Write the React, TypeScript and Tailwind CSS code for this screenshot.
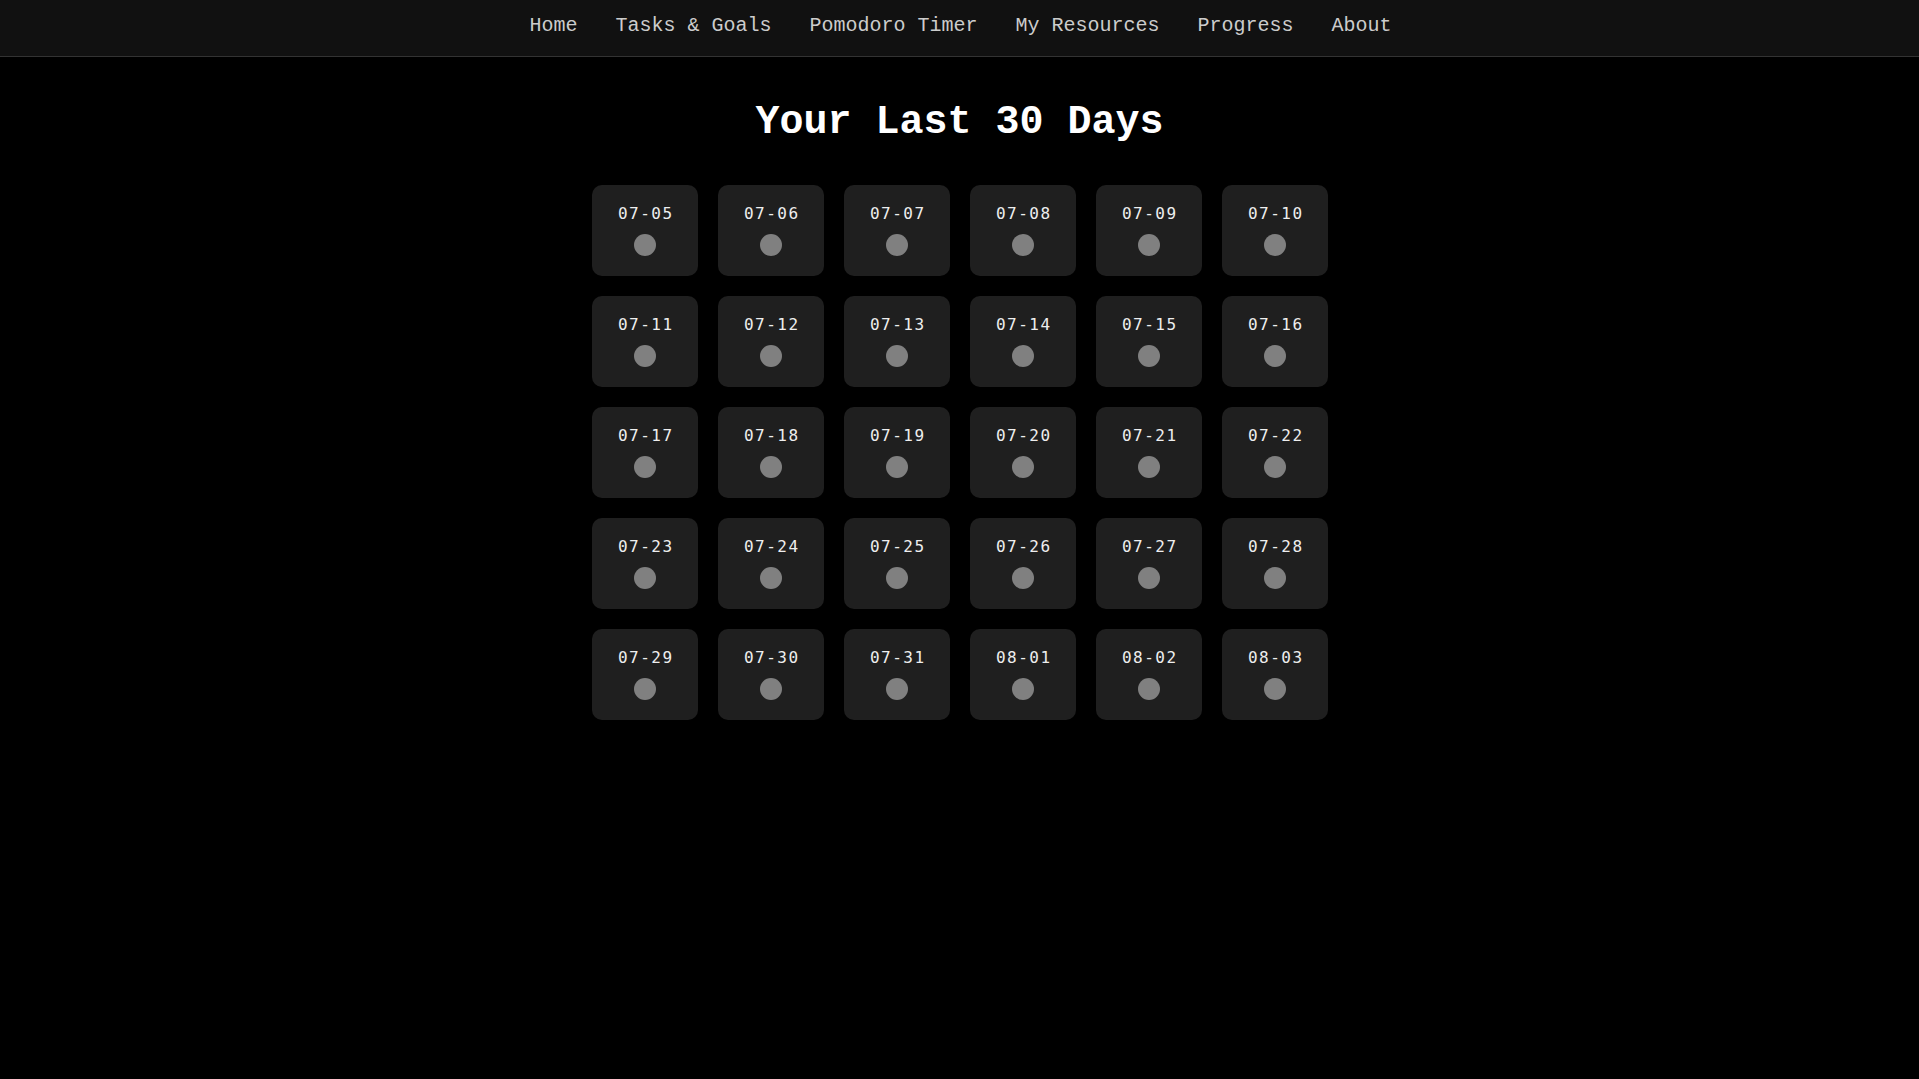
import React from "react";

const navItems = ["Home", "Tasks & Goals", "Pomodoro Timer", "My Resources", "Progress", "About"];

function buildDays(): string[] {
  const out: string[] = [];
  const start = new Date(2024, 6, 5);
  for (let i = 0; i < 30; i++) {
    const d = new Date(start.getFullYear(), start.getMonth(), start.getDate() + i);
    const mm = String(d.getMonth() + 1).padStart(2, "0");
    const dd = String(d.getDate()).padStart(2, "0");
    out.push(`${mm}-${dd}`);
  }
  return out;
}

export default function App() {
  const days = buildDays();
  return (
    <div className="min-h-[1079px] w-full bg-black" style={{ fontFamily: '"Liberation Mono", "Courier New", monospace' }}>
      <nav className="h-[57px] w-full bg-[#111111] border-b border-[#333333] flex justify-center pt-[14px]">
        <div className="flex gap-[38px] text-[20px] leading-[23px] text-[#cccccc] pl-[2px]">
          {navItems.map((n) => (
            <a key={n} className="whitespace-pre cursor-pointer">{n}</a>
          ))}
        </div>
      </nav>
      <h1 className="mt-[43px] text-center text-[40px] leading-[46px] font-bold text-white">Your Last 30 Days</h1>
      <div className="mt-[39px] flex justify-center pl-[1px]">
        <div className="grid grid-cols-[repeat(6,106px)] gap-x-[20px] gap-y-[20px]">
          {days.map((d) => (
            <div key={d} className="h-[91px] rounded-[10px] bg-[#1f1f1f] flex flex-col items-center pt-[19px]">
              <div
                className="text-[16px] leading-[20px] tracking-[1.5px] text-[#eeeeee] pl-[1.5px]"
                style={{ fontFamily: '"DejaVu Sans Mono", "Liberation Mono", monospace' }}
              >
                {d}
              </div>
              <div className="mt-[10px] w-[22px] h-[22px] rounded-full bg-[#808080]" />
            </div>
          ))}
        </div>
      </div>
    </div>
  );
}
